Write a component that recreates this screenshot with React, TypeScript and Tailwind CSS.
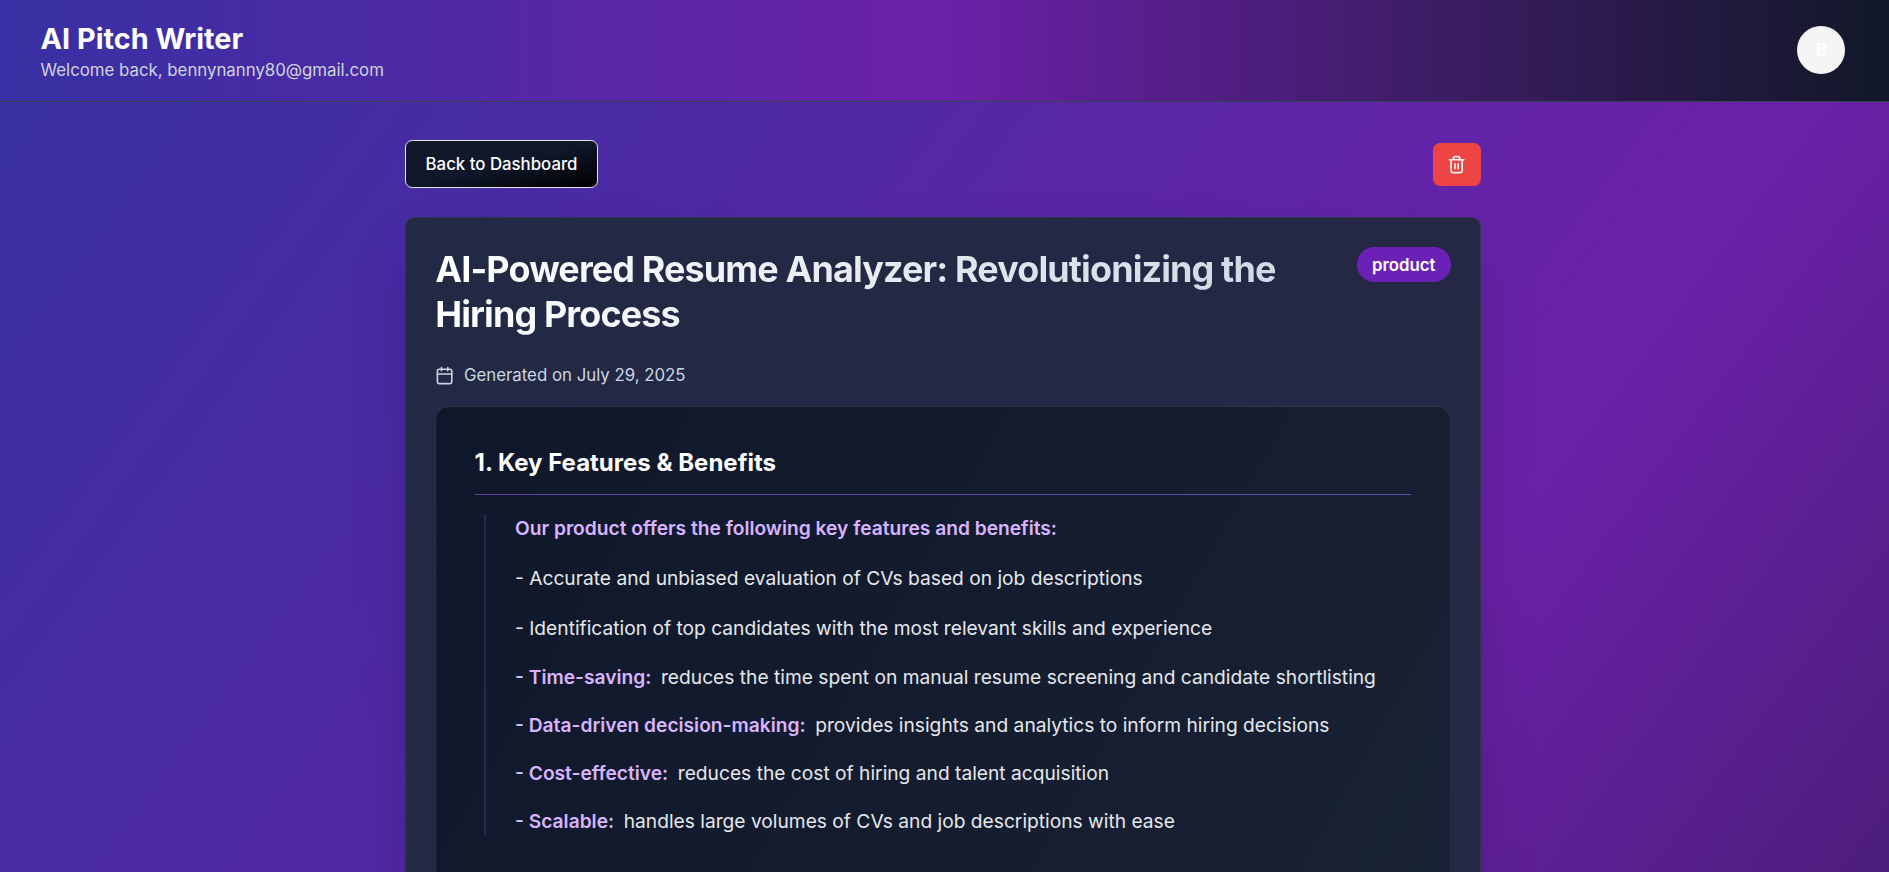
import { Calendar, Trash2 } from "lucide-react";

type Item = { label?: string; text?: string };

const items: Item[] = [
  { label: "Our product offers the following key features and benefits:" },
  { text: "- Accurate and unbiased evaluation of CVs based on job descriptions" },
  { text: "- Identification of top candidates with the most relevant skills and experience" },
  { label: "- Time-saving:", text: "reduces the time spent on manual resume screening and candidate shortlisting" },
  { label: "- Data-driven decision-making:", text: "provides insights and analytics to inform hiring decisions" },
  { label: "- Cost-effective:", text: "reduces the cost of hiring and talent acquisition" },
  { label: "- Scalable:", text: "handles large volumes of CVs and job descriptions with ease" },
];

function Header() {
  return (
    <header className="border-b border-gray-700 bg-linear-to-r/srgb from-[#3730a3] via-[#6b21a8] to-[#111827] pr-[2.5px]">
      <div className="mx-auto flex max-w-[1536px] items-center justify-between px-4 py-4">
        <div>
          <h1 className="pt-px text-2xl leading-[31px] font-bold text-white">AI Pitch Writer</h1>
          <p className="pt-px text-sm leading-[19px] text-[#d1d5db]">Welcome back, bennynanny80@gmail.com</p>
        </div>
        <div className="flex size-10 items-center justify-center rounded-full bg-[#f5f5f5] pt-px text-sm font-semibold text-white">
          B
        </div>
      </div>
    </header>
  );
}

function Row({ label, text }: Item) {
  if (!label) {
    return <p className="pt-px leading-[25px] text-[#e5e7eb]">{text}</p>;
  }
  return (
    <div className="flex gap-2">
      <span className="font-semibold text-[#d8b4fe]">{label}</span>
      {text && <span className="text-[#e5e7eb]">{text}</span>}
    </div>
  );
}

function PitchCard() {
  return (
    <article className="h-[1900px] rounded-lg border border-[#374151]/60 bg-[#1e293b]/90 p-6 shadow-2xl">
      <div className="flex items-start justify-between">
        <h2 className="w-[860px] bg-linear-to-r/srgb from-white to-[#cbd5e1] bg-clip-text text-3xl leading-tight font-bold tracking-tight text-transparent">
          AI-Powered Resume Analyzer: Revolutionizing the Hiring Process
        </h2>
        <span className="rounded-full border border-transparent bg-[#6b21b6] px-3 pt-[5px] pb-1 text-sm leading-[19px] font-semibold text-white">
          product
        </span>
      </div>
      <div className="mt-[22px] flex items-center gap-2 text-sm text-[#cbd5e1]">
        <Calendar className="size-4" />
        <span className="pt-px leading-[19px]">Generated on July 29, 2025</span>
      </div>
      <section className="mt-4 h-[1500px] rounded-xl border border-[#374151]/50 bg-linear-to-br/srgb from-[#0f172a] to-[#1e293b] p-8">
        <h3 className="mb-4 border-b border-transparent pb-3 text-xl font-bold text-white [border-image:linear-gradient(to_right,#6a409f,#5250a9)_1]">
          1. Key Features &amp; Benefits
        </h3>
        <div className="ml-2 space-y-4 border-l-2 border-[#a855f7]/20 pl-6">
          {items.map((item, i) => (
            <Row key={i} {...item} />
          ))}
        </div>
      </section>
    </article>
  );
}

export default function App() {
  return (
    <div className="h-[872px] w-full overflow-hidden bg-[#111827]">
      <div className="h-[2130px] bg-linear-to-br/srgb from-[#3730a3] via-[#6b21a8] to-[#111827] font-[Inter,sans-serif] [zoom:1.2]">
        <Header />
        <main className="py-8 pr-[2.5px]">
          <div className="mx-auto w-[896px]">
            <div className="mb-6 flex items-center justify-between">
              <button className="h-10 rounded-md border border-[#e5e7eb] bg-linear-to-br/srgb from-[#111827] via-[#0f172a] to-black px-4 pt-px text-sm leading-[19px] font-medium text-white">
                Back to Dashboard
              </button>
              <button aria-label="Delete" className="flex h-9 items-center rounded-md bg-[#ef4444] px-3 text-[#fafafa]">
                <Trash2 className="size-4" />
              </button>
            </div>
            <PitchCard />
          </div>
        </main>
      </div>
    </div>
  );
}
